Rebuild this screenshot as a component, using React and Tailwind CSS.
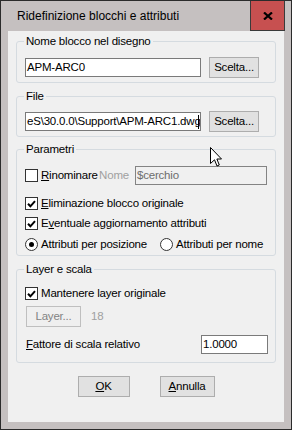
import React from 'react';

const Check = ({ checked }) => (
  <span className="flex h-[13px] w-[13px] shrink-0 items-center justify-center border border-[#333333] bg-white">
    {checked && (
      <svg width="9" height="8" viewBox="0 0 9 8">
        <path d="M1 3.8 L3.4 6.3 L8 1.2" fill="none" stroke="#000" strokeWidth="2" />
      </svg>
    )}
  </span>
);

const Radio = ({ checked }) => (
  <span className="flex h-[13px] w-[13px] shrink-0 items-center justify-center rounded-full border border-[#333333] bg-white">
    {checked && <span className="h-[5px] w-[5px] rounded-full bg-black" />}
  </span>
);

const Group = ({ title, className, children }) => (
  <fieldset className={`mx-[8px] rounded-[3px] border border-[#d5dbe0] px-[8px] ${className}`}>
    <legend className="ml-[-1px] px-[2px] leading-[13px]">{title}</legend>
    {children}
  </fieldset>
);

const Btn = ({ children, className }) => (
  <button className={`flex h-[21px] items-center justify-center border border-[#adadad] bg-[#e1e1e1] ${className}`}>
    {children}
  </button>
);

const U = ({ children }) => <span className="underline underline-offset-[1px]">{children}</span>;

export default function App() {
  return (
    <div className="relative flex h-[430px] w-[292px] flex-col border border-[#2b2b2b] bg-[#c5c0c0] font-['Liberation_Sans',Arial,sans-serif] text-[11.5px] tracking-[-0.2px] text-black">
      {/* title bar */}
      <div className="flex h-[30px] shrink-0 items-center">
        <span className="ml-[16px] text-[12px] tracking-normal">Ridefinizione blocchi e attributi</span>
        <div className="ml-auto mr-[6px] flex h-full w-[35px] items-center justify-center border-x border-b border-[#3a3a3a] bg-[#c75050]">
          <svg width="10" height="8" viewBox="0 0 10 8">
            <path d="M1 0.5 L9 7.5 M9 0.5 L1 7.5" stroke="#000" strokeWidth="2.2" />
          </svg>
        </div>
      </div>

      {/* client area */}
      <div className="mx-[7px] mb-[7px] flex flex-1 flex-col bg-[#f0f0f0] pt-[4px]">
        <Group title="Nome blocco nel disegno" className="pt-[9px] pb-[4px]">
          <div className="flex h-[21px] items-center gap-[8px]">
            <div className="h-[19px] w-[176px] overflow-hidden whitespace-nowrap border border-[#7a7a7a] bg-white px-[1px] leading-[17px]">
              APM-ARC0
            </div>
            <Btn className="w-[50px]">Scelta...</Btn>
          </div>
        </Group>

        <Group title="File" className="mt-[7px] pt-[8px] pb-[4px]">
          <div className="flex h-[21px] items-center gap-[8px]">
            <div className="flex h-[19px] w-[176px] items-center overflow-hidden whitespace-nowrap border border-[#7a7a7a] bg-white px-[1px] leading-[17px]">
              <span>eS\30.0.0\Support\APM-ARC1.dwg</span>
              <span className="ml-[-3px] h-[14px] w-[1px] shrink-0 bg-black" />
            </div>
            <Btn className="w-[50px]">Scelta...</Btn>
          </div>
        </Group>

        <Group title="Parametri" className="mt-[6px] pt-[10px] pb-[2px]">
          <div className="flex h-[19px] items-center">
            <Check />
            <span className="ml-[3px]">
              <U>R</U>inominare
            </span>
            <span className="ml-auto mr-[6px] text-[#a0a0a0]">Nome</span>
            <div className="h-[19px] w-[132px] border border-[#838383] bg-[#f0f0f0] px-[1px] leading-[17px] text-[#6d6d6d]">
              $cerchio
            </div>
          </div>
          <div className="mt-[10px] flex h-[17px] items-center">
            <Check checked />
            <span className="ml-[3px]">
              <U>E</U>liminazione blocco originale
            </span>
          </div>
          <div className="mt-[3px] flex h-[17px] items-center">
            <Check checked />
            <span className="ml-[3px]">
              E<U>v</U>entuale aggiornamento attributi
            </span>
          </div>
          <div className="mt-[4px] flex h-[17px] items-center">
            <div className="flex w-[135px] items-center">
              <Radio checked />
              <span className="ml-[3px]">Attributi per posizione</span>
            </div>
            <Radio />
            <span className="ml-[3px]">Attributi per nome</span>
          </div>
        </Group>

        <Group title="Layer e scala" className="mt-[7px] pt-[9px] pb-[8px]">
          <div className="flex h-[17px] items-center">
            <Check checked />
            <span className="ml-[3px]">Mantenere layer originale</span>
          </div>
          <div className="mt-[4px] flex items-center">
            <button className="ml-[1px] flex h-[21px] w-[55px] items-center justify-center border border-[#bfbfbf] bg-[#efefef] text-[#838383]">
              Layer...
            </button>
            <span className="ml-[10px] text-[#a0a0a0]">18</span>
          </div>
          <div className="mt-[8px] flex h-[19px] items-center">
            <span className="ml-[1px]">
              <U>F</U>attore di scala relativo
            </span>
            <div className="ml-auto mr-[-1px] h-[19px] w-[67px] border border-[#7a7a7a] bg-white px-[1px] leading-[17px]">
              1.0000
            </div>
          </div>
        </Group>

        <div className="mt-[13px] flex justify-center gap-[30px]">
          <Btn className="w-[52px] border-[#0078d7]">
            <U>O</U>K
          </Btn>
          <Btn className="w-[55px]">
            <U>A</U>nnulla
          </Btn>
        </div>
      </div>

      {/* mouse pointer */}
      <svg className="absolute left-[209px] top-[146px]" width="13" height="21" viewBox="0 0 13 21">
        <path d="M0.5 0.5 V16.5 L4.5 12.8 L7 19 L9.3 18 L6.9 12 H11.5 Z" fill="#fff" stroke="#000" strokeWidth="1" />
      </svg>
    </div>
  );
}
